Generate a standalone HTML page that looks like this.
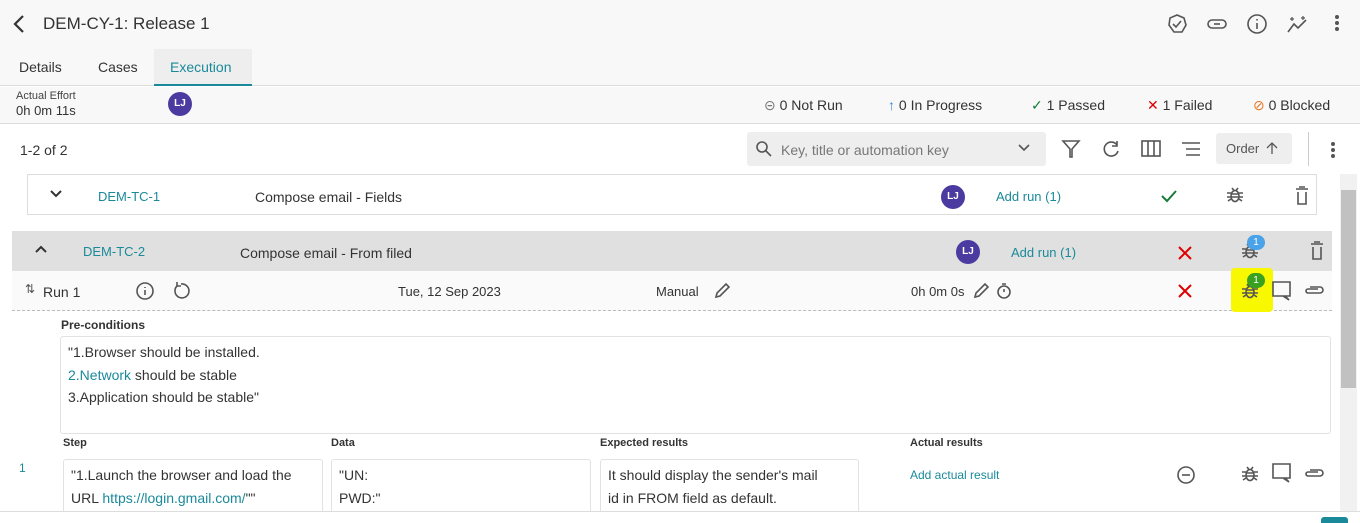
<!DOCTYPE html>
<html><head><style>
*{box-sizing:border-box;margin:0;padding:0}
body{width:1360px;height:521px;overflow:hidden;background:#fff;font-family:"Liberation Sans",sans-serif;color:#333;position:relative;font-size:14px}
.a{position:absolute;white-space:nowrap}
.teal{color:#1a8a9a}
svg{position:absolute;fill:none;stroke:#555;stroke-width:1.6}
.box{position:absolute;border:1px solid #e2e2e2;border-radius:3px;background:#fff}
</style></head><body>
<div class="a" style="left:0;top:0;width:1360px;height:86px;background:#f8f8f8;border-bottom:1px solid #ddd"></div>
<svg style="left:10px;top:13px" width="18" height="22"><path d="M13 3L5 11L13 19" stroke="#333" stroke-width="2.2"/></svg>
<div class="a" style="left:43px;top:14px;font-size:17px;color:#333">DEM-CY-1: Release 1</div>
<svg style="left:1166px;top:13px" width="22" height="22"><path d="M11 2L18 5L20 12L16 19L8 19L3 12L4 5Z"/><path d="M7 11L10 14L15 8"/></svg>
<svg style="left:1205px;top:13px" width="24" height="22"><rect x="3" y="7" width="18" height="8" rx="4"/><path d="M9 11H15"/></svg>
<svg style="left:1246px;top:13px" width="22" height="22"><circle cx="11" cy="11" r="9"/><path d="M11 10V16M11 6V7.5"/></svg>
<svg style="left:1286px;top:13px" width="24" height="22"><path d="M2 19L8 11L12 15L20 7"/><path d="M6 4V8M4 6H8M17 3V7M15 5H19" stroke-width="1.2"/></svg>
<div class="a" style="left:1335px;top:15px;width:4px;height:4px;border-radius:2px;background:#555;box-shadow:0 6px 0 #555,0 12px 0 #555"></div>
<div class="a" style="left:19px;top:59px;font-size:14px">Details</div>
<div class="a" style="left:98px;top:59px;font-size:14px">Cases</div>
<div class="a" style="left:154px;top:49px;width:98px;height:37px;background:#eee;border-bottom:2px solid #1a8a9a"></div>
<div class="a teal" style="left:170px;top:59px;font-size:14px">Execution</div>
<div class="a" style="left:0;top:87px;width:1360px;height:37px;background:#f8f8f8;border-bottom:1px solid #ddd"></div>
<div class="a" style="left:16px;top:90px;font-size:11px;color:#444">Actual Effort</div>
<div class="a" style="left:16px;top:103px;font-size:13px">0h 0m 11s</div>
<div class="a" style="left:168px;top:92px;width:24px;height:24px;border-radius:12px;background:#4b3ba0;color:#fff;font-size:10px;text-align:center;line-height:24px;font-weight:bold">LJ</div>
<div class="a" style="left:764px;top:97px;font-size:14px"><span style="color:#777">⊝</span> 0 Not Run</div>
<div class="a" style="left:888px;top:97px;font-size:14px"><span style="color:#3b82e0">↑</span> 0 In Progress</div>
<div class="a" style="left:1031px;top:97px;font-size:14px"><span style="color:#1a7a3a">✓</span> 1 Passed</div>
<div class="a" style="left:1147px;top:97px;font-size:14px"><span style="color:#d00">✕</span> 1 Failed</div>
<div class="a" style="left:1253px;top:97px;font-size:14px"><span style="color:#e87722">⊘</span> 0 Blocked</div>
<div class="a" style="left:20px;top:142px;font-size:14px">1-2 of 2</div>
<div class="a" style="left:747px;top:132px;width:299px;height:34px;background:#eee;border-radius:3px"></div>
<svg style="left:755px;top:140px" width="18" height="18"><circle cx="7" cy="7" r="5"/><path d="M11 11L16 16"/></svg>
<div class="a" style="left:781px;top:142px;font-size:14px;color:#777">Key, title or automation key</div>
<svg style="left:1018px;top:143px" width="12" height="10"><path d="M1 2L6 7L11 2"/></svg>
<svg style="left:1061px;top:139px" width="20" height="20"><path d="M2 2H18L11 10V18H9V10Z"/></svg>
<svg style="left:1101px;top:139px" width="20" height="20"><path d="M16 6A7 7 0 1 0 17 12"/><path d="M16 2V7H11"/></svg>
<svg style="left:1140px;top:139px" width="22" height="20"><rect x="2" y="2" width="18" height="15"/><path d="M8 2V17M14 2V17"/></svg>
<svg style="left:1180px;top:139px" width="22" height="20"><path d="M2 4H20M6 10H20M6 16H20"/></svg>
<div class="a" style="left:1216px;top:133px;width:76px;height:31px;background:#eee;border-radius:3px;font-size:13px;line-height:31px;padding-left:10px;color:#555">Order</div>
<svg style="left:1266px;top:141px" width="12" height="14"><path d="M6 13V2M1 7L6 2L11 7" stroke-width="1.3"/></svg>
<div class="a" style="left:1308px;top:132px;width:1px;height:34px;background:#ccc"></div>
<div class="a" style="left:1331px;top:142px;width:4px;height:4px;border-radius:2px;background:#555;box-shadow:0 6px 0 #555,0 12px 0 #555"></div>
<div class="a" style="left:1340px;top:174px;width:17px;height:337px;background:#f1f1f1"></div>
<div class="a" style="left:1341px;top:190px;width:15px;height:198px;background:#c1c1c1"></div>
<!-- row 1 -->
<div class="a" style="left:27px;top:174px;width:1290px;height:41px;border:1px solid #ddd;background:#fff"></div>
<svg style="left:49px;top:189px" width="14" height="10"><path d="M2 2L7 7L12 2" stroke="#333" stroke-width="2"/></svg>
<div class="a teal" style="left:98px;top:189px;font-size:13px">DEM-TC-1</div>
<div class="a" style="left:255px;top:189px;font-size:14px">Compose email - Fields</div>
<div class="a" style="left:941px;top:185px;width:24px;height:24px;border-radius:12px;background:#4b3ba0;color:#fff;font-size:10px;text-align:center;line-height:24px;font-weight:bold">LJ</div>
<div class="a teal" style="left:996px;top:189px;font-size:13px">Add run (1)</div>
<svg style="left:1160px;top:188px" width="18" height="16"><path d="M2 8L7 13L16 3" stroke="#1a7a3a" stroke-width="2"/></svg>
<svg style="left:1227px;top:186px" width="16" height="18" stroke-width="1.4"><ellipse cx="8" cy="10" rx="4" ry="5.5"/><path d="M4 8H12M4 11H12M0 7H4M0 11H4M1 15L4 13M12 7H16M12 11H16M15 15L12 13M5 2L7 4.5M11 2L9 4.5"/></svg>
<svg style="left:1293px;top:186px" width="18" height="20"><path d="M3 3H15M5 6V18H13V6M6 1H12"/></svg>
<!-- row 2 -->
<div class="a" style="left:12px;top:231px;width:1320px;height:40px;background:#e0e0e0"></div>
<svg style="left:34px;top:244px" width="14" height="10"><path d="M2 8L7 3L12 8" stroke="#333" stroke-width="2"/></svg>
<div class="a teal" style="left:83px;top:244px;font-size:13px">DEM-TC-2</div>
<div class="a" style="left:240px;top:245px;font-size:14px">Compose email - From filed</div>
<div class="a" style="left:956px;top:240px;width:24px;height:24px;border-radius:12px;background:#4b3ba0;color:#fff;font-size:10px;text-align:center;line-height:24px;font-weight:bold">LJ</div>
<div class="a teal" style="left:1011px;top:245px;font-size:13px">Add run (1)</div>
<svg style="left:1177px;top:245px" width="16" height="16"><path d="M2 2L14 14M14 2L2 14" stroke="#d00" stroke-width="2"/></svg>
<svg style="left:1242px;top:242px" width="16" height="18" stroke-width="1.4"><ellipse cx="8" cy="10" rx="4" ry="5.5"/><path d="M4 8H12M4 11H12M0 7H4M0 11H4M1 15L4 13M12 7H16M12 11H16M15 15L12 13M5 2L7 4.5M11 2L9 4.5"/></svg>
<div class="a" style="left:1247px;top:235px;width:18px;height:15px;border-radius:8px;background:#4aa3e8;color:#fff;font-size:10px;text-align:center;line-height:15px">1</div>
<svg style="left:1308px;top:241px" width="18" height="20"><path d="M3 3H15M5 6V18H13V6M6 1H12"/></svg>
<!-- run row -->
<div class="a" style="left:12px;top:271px;width:1320px;height:40px;background:#fafafa;border-bottom:1px dashed #bbb"></div>
<div class="a" style="left:25px;top:282px;font-size:12px;color:#555">⇅</div>
<div class="a" style="left:43px;top:284px;font-size:14px">Run 1</div>
<svg style="left:135px;top:281px" width="20" height="20"><circle cx="10" cy="10" r="8"/><path d="M10 9V14M10 6V7"/></svg>
<svg style="left:171px;top:281px" width="20" height="20"><path d="M6 5A7 7 0 1 0 10 3"/><path d="M6 1V5H10"/></svg>
<div class="a" style="left:398px;top:284px;font-size:13px">Tue, 12 Sep 2023</div>
<div class="a" style="left:656px;top:284px;font-size:13px">Manual</div>
<svg style="left:713px;top:282px" width="18" height="18"><path d="M3 15L4 11L13 2L16 5L7 14Z"/></svg>
<div class="a" style="left:911px;top:284px;font-size:13px">0h 0m 0s</div>
<svg style="left:972px;top:282px" width="18" height="18"><path d="M3 15L4 11L13 2L16 5L7 14Z"/></svg>
<svg style="left:995px;top:281px" width="18" height="20"><circle cx="9" cy="11" r="6"/><path d="M9 11V8M7 3H11"/></svg>
<svg style="left:1177px;top:283px" width="16" height="16"><path d="M2 2L14 14M14 2L2 14" stroke="#d00" stroke-width="2"/></svg>
<div class="a" style="left:1231px;top:268px;width:42px;height:44px;background:#f8f800;border-radius:4px"></div>
<svg style="left:1242px;top:282px" width="16" height="18" stroke-width="1.4"><ellipse cx="8" cy="10" rx="4" ry="5.5"/><path d="M4 8H12M4 11H12M0 7H4M0 11H4M1 15L4 13M12 7H16M12 11H16M15 15L12 13M5 2L7 4.5M11 2L9 4.5"/></svg>
<div class="a" style="left:1247px;top:273px;width:18px;height:15px;border-radius:8px;background:#3aa020;color:#fff;font-size:10px;text-align:center;line-height:15px">1</div>
<svg style="left:1271px;top:280px" width="22" height="22"><path d="M2 2H19V16H14L18 20L12 16H2Z"/></svg>
<svg style="left:1302px;top:283px" width="22" height="14"><path d="M8 4H18A3 3 0 0 1 18 10H6A2 2 0 0 1 6 6H16"/></svg>
<!-- preconditions -->
<div class="a" style="left:61px;top:318px;font-size:12px;font-weight:bold;color:#333">Pre-conditions</div>
<div class="box" style="left:60px;top:336px;width:1271px;height:98px"></div>
<div class="a" style="left:68px;top:341px;font-size:14px;line-height:22.5px">"1.Browser should be installed.<br><span class="teal">2.Network</span> should be stable<br>3.Application should be stable"</div>
<div class="a" style="left:63px;top:437px;font-size:11px;font-weight:bold">Step</div>
<div class="a" style="left:331px;top:437px;font-size:11px;font-weight:bold">Data</div>
<div class="a" style="left:600px;top:437px;font-size:11px;font-weight:bold">Expected results</div>
<div class="a" style="left:910px;top:437px;font-size:11px;font-weight:bold">Actual results</div>
<div class="a teal" style="left:19px;top:461px;font-size:12px">1</div>
<div class="box" style="left:63px;top:459px;width:260px;height:60px"></div>
<div class="box" style="left:331px;top:459px;width:260px;height:60px"></div>
<div class="box" style="left:600px;top:459px;width:259px;height:60px"></div>
<div class="a" style="left:71px;top:464px;font-size:14px;line-height:22.5px">"1.Launch the browser and load the<br>URL <span class="teal">https://login.gmail.com/</span>""</div>
<div class="a" style="left:339px;top:464px;font-size:14px;line-height:22.5px">"UN:<br>PWD:"</div>
<div class="a" style="left:608px;top:464px;font-size:14px;line-height:22.5px">It should display the sender's mail<br>id in FROM field as default.</div>
<div class="a teal" style="left:910px;top:468px;font-size:12px">Add actual result</div>
<svg style="left:1176px;top:465px" width="20" height="20"><circle cx="10" cy="10" r="8"/><path d="M6 10H14"/></svg>
<svg style="left:1242px;top:465px" width="16" height="18" stroke-width="1.4"><ellipse cx="8" cy="10" rx="4" ry="5.5"/><path d="M4 8H12M4 11H12M0 7H4M0 11H4M1 15L4 13M12 7H16M12 11H16M15 15L12 13M5 2L7 4.5M11 2L9 4.5"/></svg>
<svg style="left:1271px;top:462px" width="22" height="22"><path d="M2 2H19V16H14L18 20L12 16H2Z"/></svg>
<svg style="left:1302px;top:466px" width="22" height="14"><path d="M8 4H18A3 3 0 0 1 18 10H6A2 2 0 0 1 6 6H16"/></svg>
<div class="a" style="left:0;top:511px;width:1360px;height:10px;background:#fff;border-top:1px solid #ddd"></div>
<div class="a" style="left:1321px;top:517px;width:27px;height:6px;background:#1a8a9a;border-radius:3px 3px 0 0"></div>
</body></html>
